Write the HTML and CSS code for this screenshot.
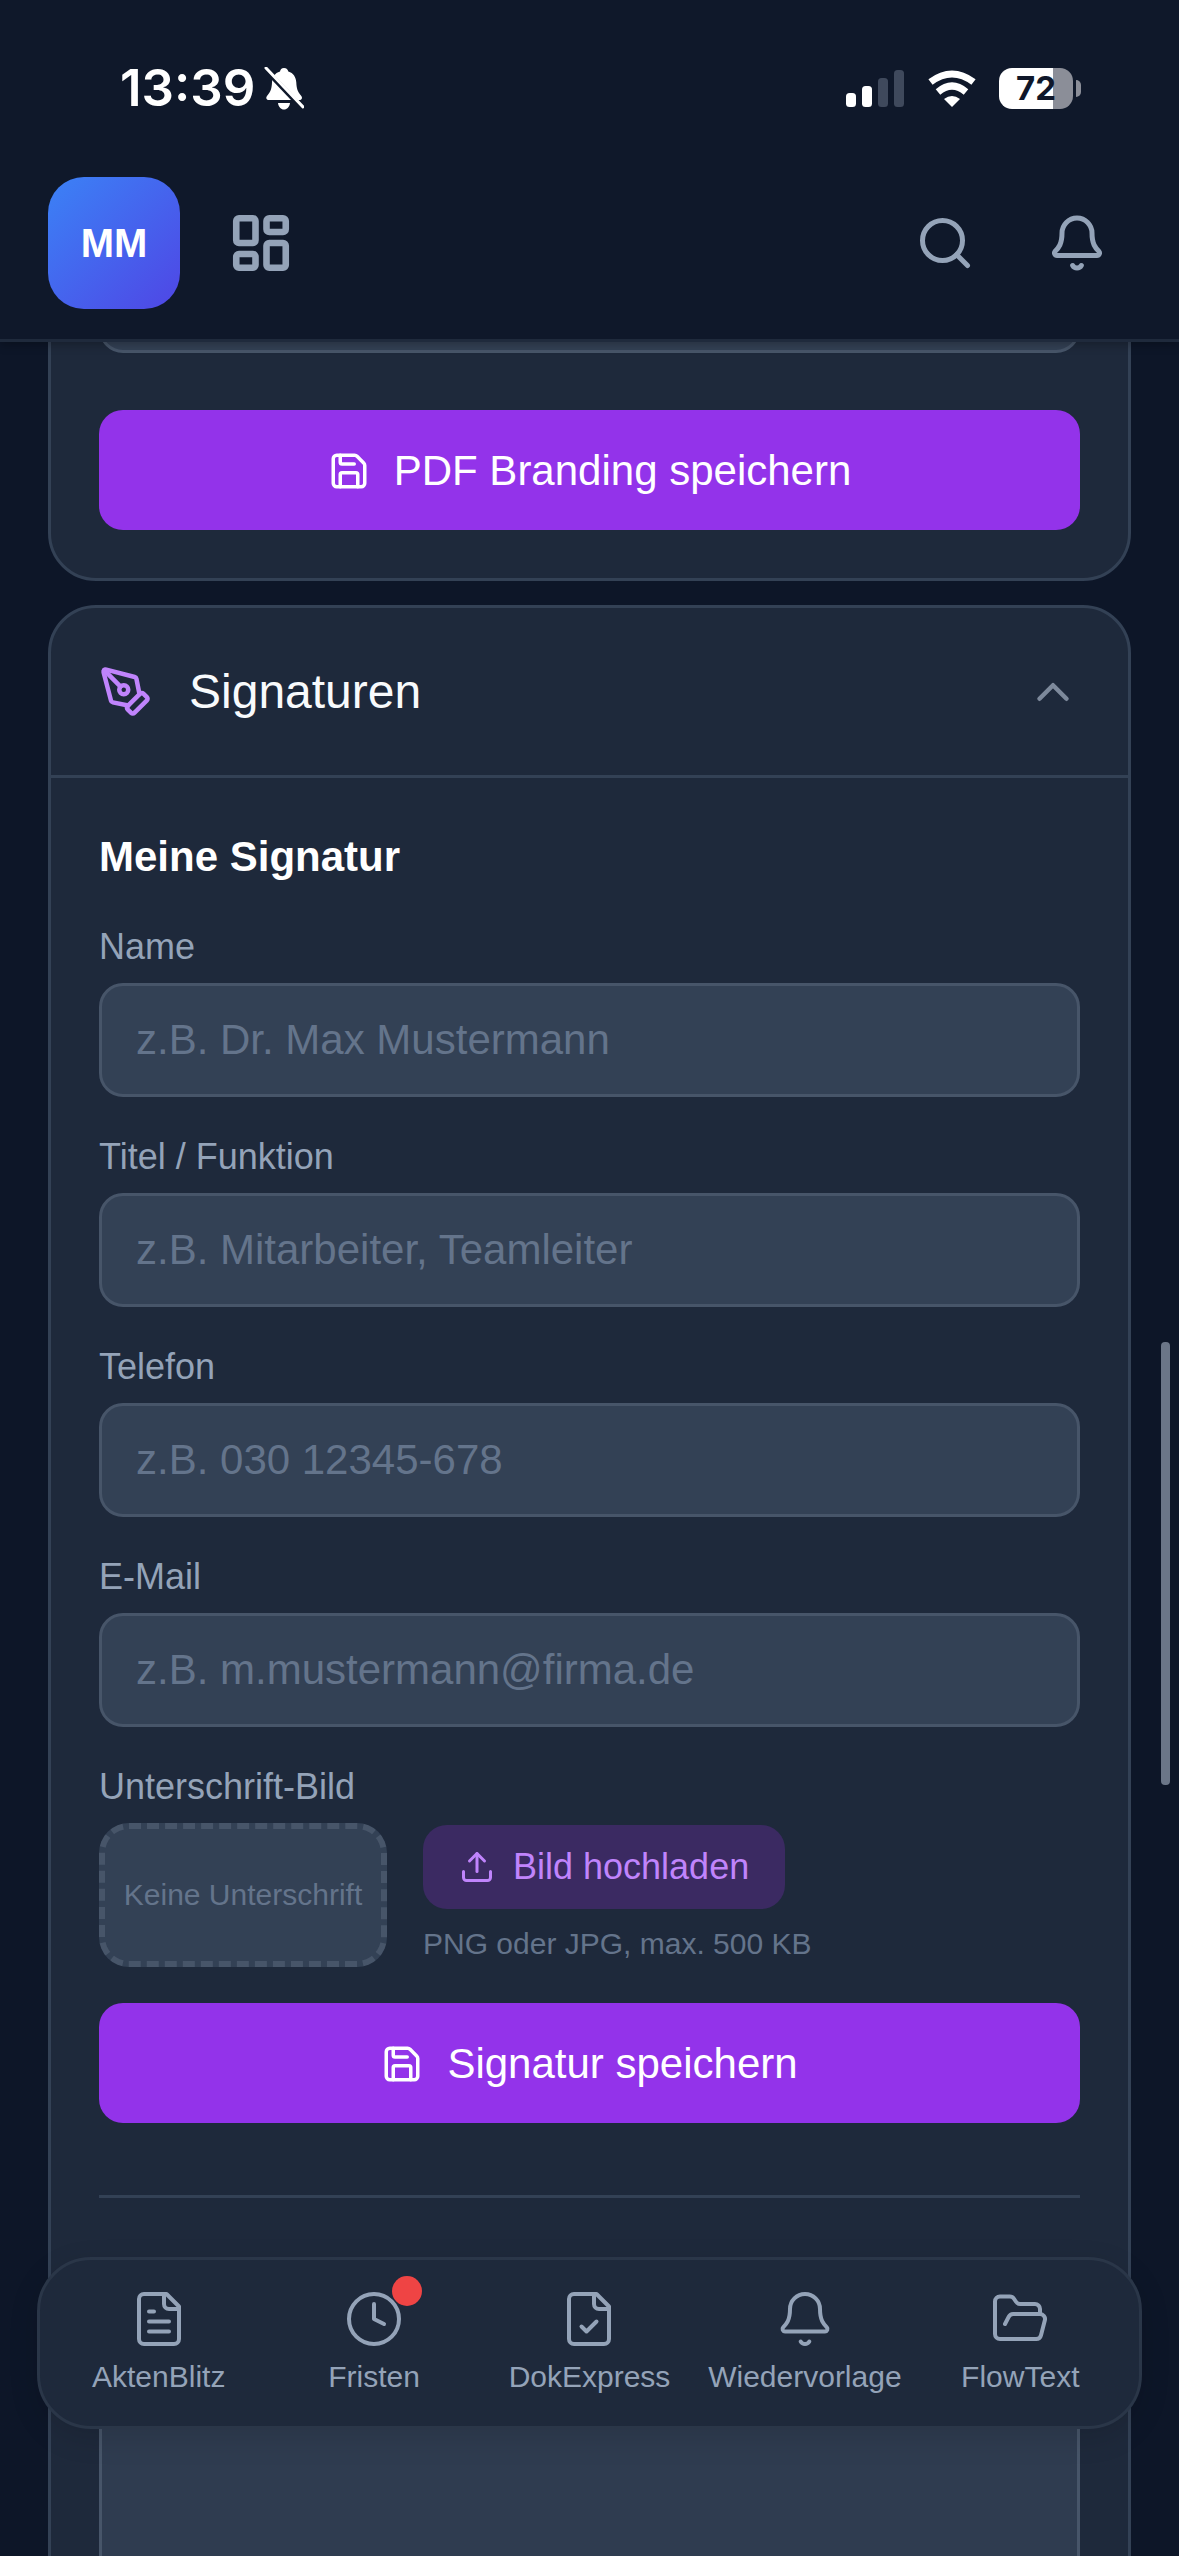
FILE: index.html
```html
<!DOCTYPE html>
<html lang="de">
<head>
  <meta charset="UTF-8">
  <meta name="viewport" content="width=device-width, initial-scale=1.0">
  <title>Einstellungen</title>
  <link rel="stylesheet" href="styles.css">
</head>
<body>
  <svg class="sprite" xmlns="http://www.w3.org/2000/svg">
    <symbol id="i-save" viewBox="0 0 24 24">
      <path d="M15.2 3a2 2 0 0 1 1.4.6l3.8 3.8a2 2 0 0 1 .6 1.4V19a2 2 0 0 1-2 2H5a2 2 0 0 1-2-2V5a2 2 0 0 1 2-2z"/>
      <path d="M17 21v-7a1 1 0 0 0-1-1H8a1 1 0 0 0-1 1v7"/>
      <path d="M7 3v4a1 1 0 0 0 1 1h7"/>
    </symbol>
    <symbol id="i-bell" viewBox="0 0 24 24">
      <path d="M10.268 21a2 2 0 0 0 3.464 0"/>
      <path d="M3.262 15.326A1 1 0 0 0 4 17h16a1 1 0 0 0 .74-1.673C19.41 13.956 18 12.499 18 8A6 6 0 0 0 6 8c0 4.499-1.411 5.956-2.738 7.326"/>
    </symbol>
  </svg>

  <header class="app-header">
    <div class="status-bar">
      <span class="status-time">13:39</span>
      <svg class="status-mute" viewBox="0 0 40 43">
        <path class="mute-fill" d="M20 1c2.500 0 4 1.700 4.300 3.500 5.200 1.500 7.700 5.800 8 11 .3 5.500 1 9 5 13.500 1.500 1.800.5 4-2 4H5c-2.500 0-3.500-2.200-2-4 4-4.500 4.700-8 5-13.500.3-5.200 2.800-9.500 8-11C16.300 2.700 17.500 1 20 1zM14 36h12c-.5 4-3 6.500-6 6.500S14.500 40 14 36z"/>
        <path class="mute-gap" d="M2 3l36 38"/>
        <path class="mute-line" d="M2 1l37 39"/>
      </svg>
      <div class="status-icons">
        <svg class="status-signal" viewBox="0 0 58 37">
          <rect class="bar-on" x="0" y="23" width="10" height="14" rx="3.500"/>
          <rect class="bar-on" x="16" y="16" width="10" height="21" rx="3.500"/>
          <rect class="bar-off" x="32" y="8" width="10" height="29" rx="3.500"/>
          <rect class="bar-off" x="48" y="0" width="10" height="37" rx="3.500"/>
        </svg>
        <svg class="status-wifi" viewBox="0 0 50 37">
          <path class="wifi-arc" d="M3.500 12Q25-4 46.500 12"/>
          <path class="wifi-arc" d="M11 22Q25 10 39 22"/>
          <path class="wifi-dot" d="M25 37L17 29Q25 23 33 29Z"/>
        </svg>
        <div class="battery">72</div>
        <div class="battery-nub"></div>
      </div>
    </div>
    <div class="top-bar">
      <div class="avatar">MM</div>
      <svg class="icon icon-dashboard" viewBox="0 0 24 24">
        <rect x="3" y="3" width="7" height="9" rx="1"/>
        <rect x="14" y="3" width="7" height="5" rx="1"/>
        <rect x="14" y="12" width="7" height="9" rx="1"/>
        <rect x="3" y="16" width="7" height="5" rx="1"/>
      </svg>
      <div class="top-actions">
        <svg class="icon icon-top" viewBox="0 0 24 24">
          <circle cx="11" cy="11" r="8"/>
          <path d="m21 21-4.300-4.300"/>
        </svg>
        <svg class="icon icon-top"><use href="#i-bell"/></svg>
      </div>
    </div>
  </header>

  <main class="content">
    <section class="card card-scrolled">
      <div class="card-body">
        <input class="text-input" type="text">
        <button class="save-button save-branding">
          <svg class="icon icon-save"><use href="#i-save"/></svg>
          PDF Branding speichern
        </button>
      </div>
    </section>

    <section class="card">
      <div class="card-head">
        <svg class="icon icon-pen" viewBox="0 0 24 24">
          <path d="M15.707 21.293a1 1 0 0 1-1.414 0l-1.586-1.586a1 1 0 0 1 0-1.414l5.586-5.586a1 1 0 0 1 1.414 0l1.586 1.586a1 1 0 0 1 0 1.414z"/>
          <path d="m18 13-1.375-6.874a1 1 0 0 0-.746-.776L3.235 2.028a1 1 0 0 0-1.207 1.207L5.350 15.879a1 1 0 0 0 .776.746L13 18"/>
          <path d="m2.300 2.300 7.286 7.286"/>
          <circle cx="11" cy="11" r="2"/>
        </svg>
        <h2 class="card-title">Signaturen</h2>
        <svg class="icon icon-chevron" viewBox="0 0 24 24"><path d="m18 15-6-6-6 6"/></svg>
      </div>
      <div class="card-body signature-form">
        <h3 class="form-title">Meine Signatur</h3>
        <div class="field">
          <label class="field-label">Name</label>
          <input class="text-input" type="text" placeholder="z.B. Dr. Max Mustermann">
        </div>
        <div class="field">
          <label class="field-label">Titel / Funktion</label>
          <input class="text-input" type="text" placeholder="z.B. Mitarbeiter, Teamleiter">
        </div>
        <div class="field">
          <label class="field-label">Telefon</label>
          <input class="text-input" type="text" placeholder="z.B. 030 12345-678">
        </div>
        <div class="field">
          <label class="field-label">E-Mail</label>
          <input class="text-input" type="text" placeholder="z.B. m.mustermann@firma.de">
        </div>
        <div class="field">
          <label class="field-label">Unterschrift-Bild</label>
          <div class="upload-row">
            <div class="upload-preview">Keine Unterschrift</div>
            <div class="upload-side">
              <button class="upload-button">
                <svg class="icon icon-upload" viewBox="0 0 24 24">
                  <path d="M21 15v4a2 2 0 0 1-2 2H5a2 2 0 0 1-2-2v-4"/>
                  <path d="M17 8l-5-5-5 5"/>
                  <path d="M12 3v12"/>
                </svg>
                Bild hochladen
              </button>
              <div class="upload-hint">PNG oder JPG, max. 500 KB</div>
            </div>
          </div>
        </div>
        <button class="save-button save-signature">
          <svg class="icon icon-save"><use href="#i-save"/></svg>
          Signatur speichern
        </button>
        <hr class="divider">
        <div class="signature-pad"></div>
      </div>
    </section>
  </main>

  <div class="scroll-thumb"></div>

  <nav class="bottom-nav">
    <div class="nav-item">
      <svg class="icon icon-nav" viewBox="0 0 24 24">
        <path d="M15 2H6a2 2 0 0 0-2 2v16a2 2 0 0 0 2 2h12a2 2 0 0 0 2-2V7Z"/>
        <path d="M14 2v4a2 2 0 0 0 2 2h4"/>
        <path d="M10 9H8"/>
        <path d="M16 13H8"/>
        <path d="M16 17H8"/>
      </svg>
      <span>AktenBlitz</span>
    </div>
    <div class="nav-item">
      <div class="nav-icon-wrap">
        <svg class="icon icon-nav" viewBox="0 0 24 24">
          <circle cx="12" cy="12" r="10"/>
          <path d="M12 6v6l4 2"/>
        </svg>
        <div class="nav-badge"></div>
      </div>
      <span>Fristen</span>
    </div>
    <div class="nav-item">
      <svg class="icon icon-nav" viewBox="0 0 24 24">
        <path d="M15 2H6a2 2 0 0 0-2 2v16a2 2 0 0 0 2 2h12a2 2 0 0 0 2-2V7Z"/>
        <path d="M14 2v4a2 2 0 0 0 2 2h4"/>
        <path d="m9 15 2 2 4-4"/>
      </svg>
      <span>DokExpress</span>
    </div>
    <div class="nav-item">
      <svg class="icon icon-nav"><use href="#i-bell"/></svg>
      <span>Wiedervorlage</span>
    </div>
    <div class="nav-item">
      <svg class="icon icon-nav" viewBox="0 0 24 24">
        <path d="m6 14 1.500-2.900A2 2 0 0 1 9.240 10H20a2 2 0 0 1 1.940 2.500l-1.540 6a2 2 0 0 1-1.950 1.500H4a2 2 0 0 1-2-2V5a2 2 0 0 1 2-2h3.900a2 2 0 0 1 1.690.9l.81 1.200a2 2 0 0 0 1.670.9H18a2 2 0 0 1 2 2v2"/>
      </svg>
      <span>FlowText</span>
    </div>
  </nav>
</body>
</html>
```

FILE: styles.css
```css
* {
  box-sizing: border-box;
}

html, body {
  height: 2556px;
}

body {
  margin: 0;
  position: relative;
  display: flex;
  flex-direction: column;
  overflow: hidden;
  background-color: #0d1628;
  color: #fff;
  font-family: "Liberation Sans", Arial, sans-serif;
}

.sprite {
  display: none;
}

.icon {
  display: block;
  flex: none;
  fill: none;
  stroke: currentColor;
  stroke-width: 2;
  stroke-linecap: round;
  stroke-linejoin: round;
}

/* header + status bar */
.app-header {
  position: relative;
  z-index: 2;
  flex: none;
  background-color: #0f182a;
  border-bottom: 3px solid #1f2a3c;
  box-shadow: 0 3px 9px rgba(0, 0, 0, 0.25);
  padding-bottom: 30px;
}

.status-bar {
  display: flex;
  align-items: center;
  height: 177px;
  padding: 0 98px 1px 120px;
}

.status-time {
  font-family: Inter, "Liberation Sans", sans-serif;
  font-size: 51px;
  font-weight: 600;
  line-height: 60px;
}

.status-mute {
  width: 40px;
  height: 43px;
  margin-left: 9px;
}

.mute-fill {
  fill: #fff;
}

.mute-gap {
  fill: none;
  stroke: #0f182a;
  stroke-width: 5;
}

.mute-line {
  fill: none;
  stroke: #fff;
  stroke-width: 3;
  stroke-linecap: round;
}

.status-icons {
  display: flex;
  align-items: center;
  margin-left: auto;
}

.status-signal {
  width: 58px;
  height: 37px;
  margin-right: 23px;
}

.bar-on {
  fill: #fff;
}

.bar-off {
  fill: #3f495c;
}

.status-wifi {
  width: 50px;
  height: 37px;
  margin-right: 22px;
}

.wifi-arc {
  fill: none;
  stroke: #fff;
  stroke-width: 7;
}

.wifi-dot {
  fill: #fff;
}

.battery {
  display: flex;
  align-items: center;
  justify-content: center;
  width: 74px;
  height: 41px;
  border-radius: 13px;
  background: linear-gradient(90deg, #fff 54px, #8b8e98 54px);
  color: #0f172a;
  font-family: Inter, "Liberation Sans", sans-serif;
  font-size: 33px;
  font-weight: 700;
}

.battery-nub {
  width: 5px;
  height: 17px;
  margin-left: 3px;
  border-radius: 0 8px 8px 0;
  background-color: #8b8e98;
}

.top-bar {
  display: flex;
  align-items: center;
  padding: 0 72px 0 48px;
}

.avatar {
  display: flex;
  align-items: center;
  justify-content: center;
  width: 132px;
  height: 132px;
  margin-right: 48px;
  border-radius: 36px;
  background: linear-gradient(135deg, #3b82f6, #4f46e5);
  font-size: 40px;
  font-weight: 700;
}

.icon-dashboard {
  width: 66px;
  height: 66px;
  color: #94a3b8;
  stroke-width: 2.4;
}

.icon-top {
  width: 60px;
  height: 60px;
  color: #94a3b8;
}

.top-actions {
  display: flex;
  gap: 72px;
  margin-left: auto;
}

/* page content */
.content {
  flex: 1;
  display: flex;
  flex-direction: column;
  gap: 24px;
  min-height: 0;
  overflow: hidden;
  padding: 0 48px;
}

.card {
  flex: none;
  border: 3px solid #334155;
  border-radius: 48px;
  background-color: #1e293b;
}

.card-scrolled {
  margin-top: -154px;
}

.card-head {
  display: flex;
  align-items: center;
  height: 170px;
  padding: 0 48px;
  border-bottom: 3px solid #334155;
}

.icon-pen {
  width: 54px;
  height: 54px;
  color: #c084fc;
}

.card-title {
  margin: 0 0 0 36px;
  font-size: 48px;
  font-weight: 400;
  color: #f8fafc;
}

.icon-chevron {
  width: 54px;
  height: 54px;
  margin-left: auto;
  color: #7d899b;
}

.card-body {
  padding: 48px;
}

.signature-form {
  display: flex;
  flex-direction: column;
  gap: 30px;
}

.form-title {
  margin: 0;
  font-size: 42px;
  font-weight: 700;
  line-height: 61px;
}

.field {
  display: flex;
  flex-direction: column;
  gap: 6px;
}

.field-label {
  color: #94a3b8;
  font-size: 36px;
  line-height: 60px;
}

.text-input {
  display: block;
  width: 100%;
  height: 114px;
  padding: 0 34px;
  border: 3px solid #475569;
  border-radius: 24px;
  outline: none;
  background-color: #334155;
  color: #fff;
  font-family: inherit;
  font-size: 42px;
}

.text-input::placeholder {
  color: #64748b;
  opacity: 1;
}

.save-button {
  display: flex;
  align-items: center;
  justify-content: center;
  gap: 24px;
  width: 100%;
  height: 120px;
  padding: 2px 0 0;
  border: none;
  border-radius: 24px;
  background-color: #9333ea;
  color: #fff;
  font-family: inherit;
  font-size: 42px;
}

.save-branding {
  margin-top: 57px;
}

.save-signature {
  margin-top: 6px;
}

.icon-save {
  width: 42px;
  height: 42px;
}

.upload-row {
  display: flex;
  align-items: center;
  gap: 36px;
}

.upload-preview {
  display: flex;
  align-items: center;
  justify-content: center;
  width: 288px;
  height: 144px;
  border: 6px dashed #475569;
  border-radius: 30px;
  background-color: #334155;
  color: #64748b;
  font-size: 30px;
  white-space: nowrap;
}

.upload-side {
  display: flex;
  flex-direction: column;
  align-items: flex-start;
  gap: 12px;
}

.upload-button {
  display: flex;
  align-items: center;
  gap: 18px;
  height: 84px;
  padding: 0 36px;
  border: none;
  border-radius: 24px;
  background-color: #3b2a62;
  color: #c084fc;
  font-family: inherit;
  font-size: 36px;
}

.icon-upload {
  width: 36px;
  height: 36px;
}

.upload-hint {
  color: #64748b;
  font-size: 30px;
  line-height: 45px;
}

.divider {
  width: 100%;
  height: 3px;
  margin: 42px 0 0;
  border: none;
  background-color: #334155;
}

.signature-pad {
  flex: none;
  height: 400px;
  margin-top: 170px;
  border: 3px solid #475569;
  background-color: #2f3c50;
}

/* overlays */
.scroll-thumb {
  position: absolute;
  top: 1342px;
  right: 9px;
  width: 9px;
  height: 443px;
  border-radius: 4px;
  background-color: #6b7688;
}

.bottom-nav {
  position: absolute;
  left: 37px;
  bottom: 127px;
  display: grid;
  grid-template-columns: repeat(5, 1fr);
  width: 1105px;
  height: 172px;
  padding: 29px 11px 0;
  border: 3px solid #2a3648;
  border-radius: 54px;
  background-color: #1e293b;
  box-shadow: 0 9px 30px rgba(0, 0, 0, 0.12);
}

.nav-item {
  display: flex;
  flex-direction: column;
  align-items: center;
  gap: 10px;
  color: #94a3b8;
  font-size: 30px;
  line-height: 36px;
  white-space: nowrap;
}

.icon-nav {
  width: 60px;
  height: 60px;
  stroke-width: 1.6;
}

.nav-icon-wrap {
  position: relative;
}

.nav-badge {
  position: absolute;
  top: -13px;
  right: -18px;
  width: 30px;
  height: 30px;
  border-radius: 50%;
  background-color: #ef4444;
}
```
